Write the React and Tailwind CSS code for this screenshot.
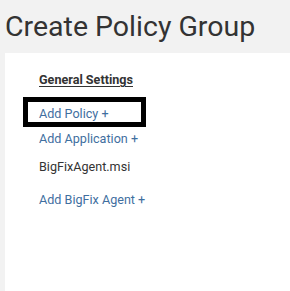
export default function App() {
    return (
        <div className="relative h-[291px] w-[290px] overflow-hidden bg-[#f2f2f2] font-['Roboto',sans-serif]">
            {/* Title */}
            <h1 className="pl-[5px] pt-[7px] text-[28.5px] leading-[39px] text-[#333]">Create Policy Group</h1>

            {/* Panel */}
            <div className="ml-[5px] mt-[7px] h-[300px] bg-white pl-[34px] pt-[18px] text-[12.6px]">
                <div className="font-bold text-[#333] underline underline-offset-2 leading-[17px]">General Settings</div>
                <div className="mt-[17px] leading-[17px] text-[#3f6f9f]">Add Policy +</div>
                <div className="mt-[8px] leading-[17px] text-[#3f6f9f]">Add Application +</div>
                <div className="mt-[11px] leading-[17px] text-[#333]">BigFixAgent.msi</div>
                <div className="mt-[16px] leading-[17px] text-[#3f6f9f]">Add BigFix Agent +</div>
            </div>

            {/* Annotation box */}
            <div className="absolute left-[23px] top-[97px] h-[30px] w-[123px] border-[5px] border-black"></div>
        </div>
    );
}
